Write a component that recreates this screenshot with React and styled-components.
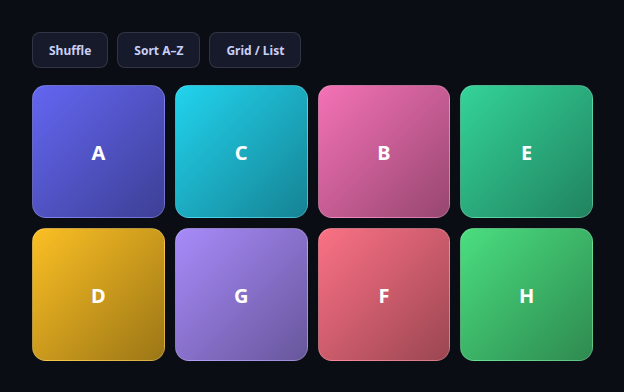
import React from "react";
import styled, { createGlobalStyle } from "styled-components";

const Global = createGlobalStyle`
  html, body { margin: 0; padding: 0; background: #0b0d14; }
  body { font-family: "Noto Sans", "Open Sans", sans-serif; }
`;

const Page = styled.div`
  padding: 32px 31px 32px 32px;
  display: flex;
  flex-direction: column;
  gap: 17px;
`;

const Toolbar = styled.div`
  display: flex;
  gap: 9px;
`;

const Button = styled.button`
  height: 36px;
  padding: 0 16px;
  border-radius: 8px;
  border: 1px solid rgba(255, 255, 255, 0.12);
  background: #161a2b;
  color: #c9cff5;
  font-family: "Noto Sans", sans-serif;
  font-size: 12px;
  font-weight: 700;
  cursor: pointer;
`;

const Grid = styled.div`
  display: grid;
  grid-template-columns: repeat(4, 1fr);
  gap: 10px;
`;

const Tile = styled.div`
  aspect-ratio: 1;
  border-radius: 14px;
  border: 1px solid rgba(255, 255, 255, 0.18);
  box-sizing: border-box;
  background: linear-gradient(135deg, rgba(0, 0, 0, 0) 0%, rgba(0, 0, 0, 0.38) 100%), ${(p) => p.$color};
  display: flex;
  align-items: center;
  justify-content: center;
  padding-top: 2px;
  color: #ffffff;
  font-size: 20px;
  font-weight: 700;
`;

const tiles = [
  ["A", "#6366f1"],
  ["C", "#22d3ee"],
  ["B", "#f472b6"],
  ["E", "#34d399"],
  ["D", "#fbbf24"],
  ["G", "#a78bfa"],
  ["F", "#fb7185"],
  ["H", "#4ade80"],
];

export default function App() {
  return (
    <>
      <Global />
      <Page>
        <Toolbar>
          <Button>Shuffle</Button>
          <Button>Sort A–Z</Button>
          <Button>Grid / List</Button>
        </Toolbar>
        <Grid>
          {tiles.map(([l, c]) => (
            <Tile key={l} $color={c}>{l}</Tile>
          ))}
        </Grid>
      </Page>
    </>
  );
}
